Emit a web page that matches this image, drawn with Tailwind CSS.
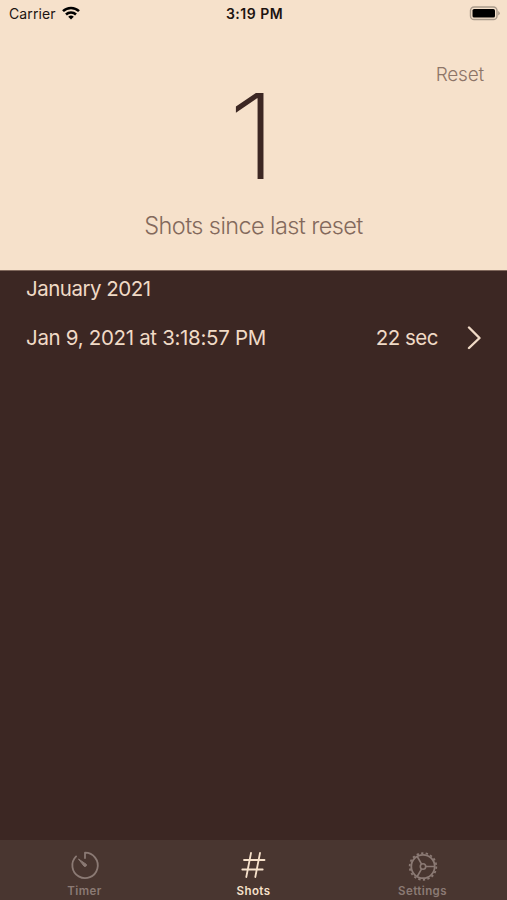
<!DOCTYPE html>
<html lang="en">
<head>
  <meta charset="UTF-8" />
  <meta name="viewport" content="width=device-width, initial-scale=1" />
  <title>Shots</title>
  <script src="https://cdn.jsdelivr.net/npm/@tailwindcss/browser@4"></script>
</head>
<body class="h-screen overflow-hidden flex flex-col bg-[#3c2723] text-[#f0dac6] font-[Inter,sans-serif]">
  <header class="h-[270px] shrink-0 flex flex-col bg-[#f6e1cb] text-[#3c2723]">
    <!-- Status bar -->
    <div class="h-[26px] shrink-0 grid grid-cols-3 items-center pl-[9px] pr-[7px] text-[#1c1411]">
      <div class="flex items-center gap-[6px]">
        <span class="text-[14px] tracking-[0.1px]">Carrier</span>
        <svg class="w-[18px] h-[14px]" viewBox="0 0 18 14" fill="none" stroke="#000" stroke-width="2.5">
          <path d="M1 5.2a11.3 11.3 0 0 1 16 0" />
          <path d="M4 8.5a7.1 7.1 0 0 1 10 0" />
          <path d="M9 13.6 6.2 10.8a4 4 0 0 1 5.6 0Z" fill="#000" stroke="none" />
        </svg>
      </div>
      <span class="text-center text-[14px] font-semibold tracking-[0.5px] whitespace-nowrap">3:19 PM</span>
      <svg class="w-[31px] h-[15px] justify-self-end" viewBox="0 0 31 15">
        <rect x="1.5" y="1" width="26.5" height="12.5" rx="3.6" fill="none" stroke="#a99a8b" stroke-width="1.4" />
        <rect x="3.5" y="3" width="22.5" height="8.5" rx="1.6" fill="#000" />
        <path d="M29.2 5v4.5q1.6-.6 1.6-2.2T29.2 5Z" fill="#a99a8b" />
      </svg>
    </div>
    <div class="flex justify-end pr-[23px] pt-[35px]">
      <button class="text-[19px] leading-[28px] font-light tracking-[-0.2px] text-[#8d7568]">Reset</button>
    </div>
    <div class="-mt-px -ml-[2px] flex justify-center text-[118px] leading-[96px] font-[180]">
      <span class="scale-x-110">1</span>
    </div>
    <p class="mt-[27px] text-center text-[23.5px] leading-[30px] font-light tracking-[-0.6px] text-[#83695c]">Shots since last reset</p>
  </header>

  <main class="flex-1 border-t border-[#80685c] px-[26px] text-[20.5px] tracking-[-0.32px]">
    <h2 class="h-[35px] leading-[36px] tracking-[-0.5px]">January 2021</h2>
    <div class="h-[64px] flex items-center">
      <span class="flex-1">Jan 9, 2021 at 3:18:57 PM</span>
      <span class="tracking-[-0.5px]">22 sec</span>
      <svg class="ml-[29px] w-[14px] h-[24px]" viewBox="0 0 14 24" fill="none" stroke="currentColor" stroke-width="2.4" stroke-linecap="round" stroke-linejoin="round">
        <path d="M2 1.5 12.5 12 2 22" />
      </svg>
    </div>
  </main>

  <!-- Tab bar -->
  <nav class="h-[60px] shrink-0 grid grid-cols-3 bg-[#493630] text-[11.5px] leading-[14px] font-semibold tracking-[0.4px] text-[#8b7a74]">
    <a class="flex flex-col items-center pt-[10px]">
      <svg class="w-[30px] h-[32px]" viewBox="0 0 30 32" fill="none" stroke="currentColor" stroke-width="1.8" stroke-linecap="round" stroke-linejoin="round">
        <path d="M15 8V2.7a12.7 12.7 0 1 1-8.9 3.7" />
        <path d="M8.8 9.2l7.6 5.2a1.5 1.5 0 0 1-2 2Z" fill="currentColor" stroke-width="1" />
      </svg>
      <span class="mt-[2px]">Timer</span>
    </a>
    <a class="flex flex-col items-center pt-[10px] text-[#f6e1cb]">
      <svg class="w-[30px] h-[32px]" viewBox="0 0 30 32" fill="none" stroke="currentColor" stroke-width="1.8" stroke-linecap="round">
        <path d="M12 3 7.3 27M21 3 16.3 27M5 10h20.5M3.3 19.5h20.4" />
      </svg>
      <span class="mt-[2px]">Shots</span>
    </a>
    <a class="flex flex-col items-center pt-[10px]">
      <svg class="w-[30px] h-[32px]" viewBox="0 0 30 32" fill="none" stroke="currentColor" stroke-width="1.8">
        <circle cx="15" cy="16.5" r="11.7" />
        <circle cx="15" cy="16.5" r="13.3" stroke-dasharray="2.3 2.343" />
        <circle cx="15" cy="16.5" r="2.7" stroke-width="1.6" />
        <path d="M17.7 16.5h9M13.6 14.2 9.2 6.5M13.6 18.8 9.2 26.5" stroke-width="1.6" />
      </svg>
      <span class="mt-[2px]">Settings</span>
    </a>
  </nav>
</body>
</html>
